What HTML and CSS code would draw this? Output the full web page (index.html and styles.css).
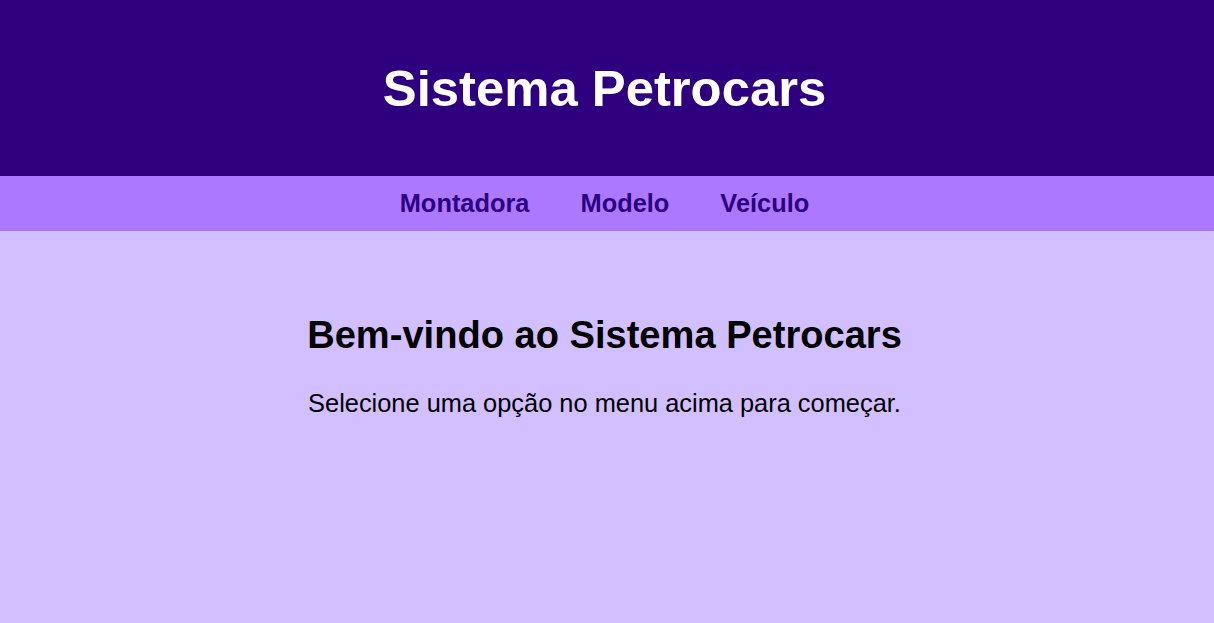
FILE: index.html
```html
<!DOCTYPE html>
<html lang="pt-BR">
<head>
<meta charset="utf-8">
<title>Sistema Petrocars</title>
<link rel="stylesheet" href="styles.css">
</head>
<body>
<header class="site-header">
  <h1 class="site-title">Sistema Petrocars</h1>
</header>
<nav class="site-nav">
  <a class="nav-link" href="#">Montadora</a>
  <a class="nav-link" href="#">Modelo</a>
  <a class="nav-link" href="#">Veículo</a>
</nav>
<main class="content">
  <h2 class="welcome-title">Bem-vindo ao Sistema Petrocars</h2>
  <p class="welcome-text">Selecione uma opção no menu acima para começar.</p>
</main>
</body>
</html>
```
FILE: styles.css
```css
html, body {
  margin: 0;
  padding: 0;
  height: 100%;
}
body {
  font-family: "Liberation Sans", Arial, sans-serif;
  background: #d2bfff;
  color: #000;
}
.site-header {
  background: #2e0080;
  color: #fff;
  text-align: center;
  height: 176px;
  display: flex;
  align-items: center;
  justify-content: center;
  padding-right: 5px;
  box-sizing: border-box;
}
.site-title {
  margin: 0;
  font-size: 50.8px;
  font-weight: bold;
}
.site-nav {
  background: #ab78ff;
  display: flex;
  justify-content: center;
  align-items: center;
  height: 55px;
  padding-right: 5px;
  gap: 51px;
}
.nav-link {
  color: #2e0080;
  text-decoration: none;
  font-weight: bold;
  font-size: 25.4px;
}
.content {
  text-align: center;
  padding: 51px 5px 48px 0;
}
.welcome-title {
  font-size: 38.1px;
  margin: 32px 0;
}
.welcome-text {
  font-size: 25.4px;
  margin: 25.4px 0;
}
```
